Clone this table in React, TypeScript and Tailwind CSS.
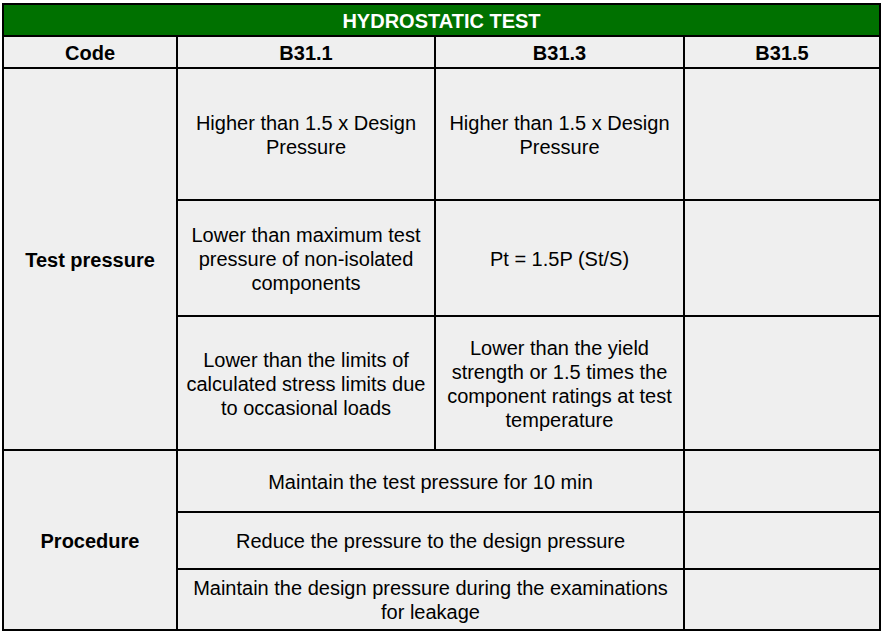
import React from "react";

const cell = "bg-[#efefef] flex items-center justify-center text-center px-2 pt-[1px]";

export default function App() {
  return (
    <div className="w-[882px] h-[632px] bg-white pt-[3px] pl-[2px] font-['Liberation_Sans',Arial,sans-serif] text-[20px] leading-[24px] text-black">
      <div className="grid w-fit bg-black p-[2px] gap-[2px] grid-cols-[172px_256px_247px_194px] grid-rows-[30px_30px_130px_114px_132px_60px_55px_59px]">
        {/* Title */}
        <div className="col-span-4 bg-[#007100] flex items-center justify-center text-white font-bold pt-[2px]">
          HYDROSTATIC TEST
        </div>

        {/* Header */}
        <div className={cell + " font-bold"}>Code</div>
        <div className={cell + " font-bold"}>B31.1</div>
        <div className={cell + " font-bold"}>B31.3</div>
        <div className={cell + " font-bold"}>B31.5</div>

        {/* Test pressure */}
        <div className={cell + " row-span-3 font-bold"}>Test pressure</div>
        <div className={cell}>
          Higher than 1.5 x Design
          <br />
          Pressure
        </div>
        <div className={cell}>
          Higher than 1.5 x Design
          <br />
          Pressure
        </div>
        <div className={cell} />

        <div className={cell}>
          Lower than maximum test
          <br />
          pressure of non-isolated
          <br />
          components
        </div>
        <div className={cell}>Pt = 1.5P (St/S)</div>
        <div className={cell} />

        <div className={cell}>
          Lower than the limits of
          <br />
          calculated stress limits due
          <br />
          to occasional loads
        </div>
        <div className={cell}>
          Lower than the yield
          <br />
          strength or 1.5 times the
          <br />
          component ratings at test
          <br />
          temperature
        </div>
        <div className={cell} />

        {/* Procedure */}
        <div className={cell + " row-span-3 font-bold"}>Procedure</div>
        <div className={cell + " col-span-2"}>Maintain the test pressure for 10 min</div>
        <div className={cell} />

        <div className={cell + " col-span-2"}>Reduce the pressure to the design pressure</div>
        <div className={cell} />

        <div className={cell + " col-span-2"}>
          Maintain the design pressure during the examinations
          <br />
          for leakage
        </div>
        <div className={cell} />
      </div>
    </div>
  );
}
